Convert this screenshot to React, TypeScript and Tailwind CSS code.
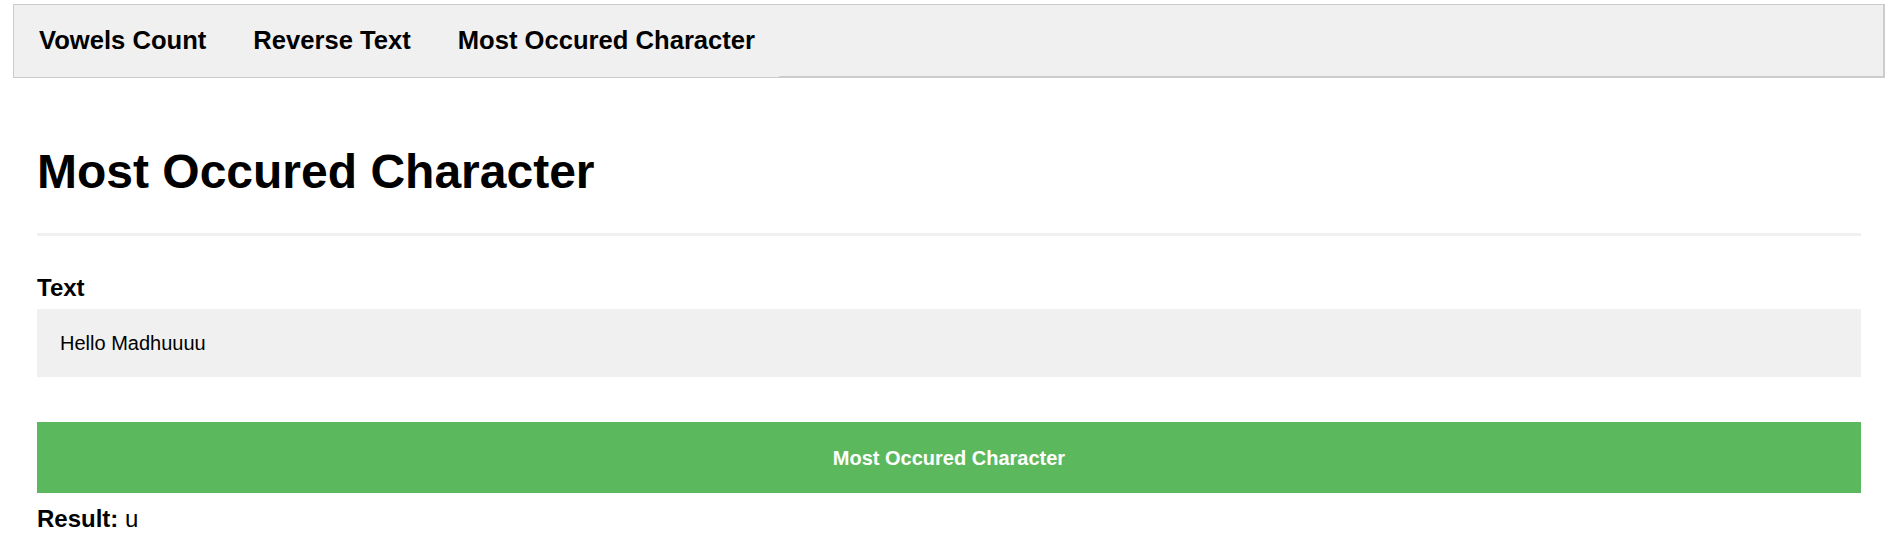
import React from "react";

export default function App() {
  const items = ["Vowels Count", "Reverse Text", "Most Occured Character"];
  return (
    <div className="min-h-[542px] bg-white text-black font-['Liberation_Sans',Arial,sans-serif]">
      <nav className="ml-[13px] mr-[9px] mt-[4px] h-[74px] box-border border-t border-l border-r-2 border-b-2 border-[#cccccc] bg-[#f0f0f0]">
        <ul className="flex h-[72px] pl-[1.5px] w-fit bg-[#f0f0f0]">
          {items.map((t) => (
            <li key={t} className="flex items-center px-[23.5px] text-[25.6px] font-bold leading-none">
              {t}
            </li>
          ))}
        </ul>
      </nav>
      <div className="ml-[37px] mr-[33px]">
        <h1 className="mt-[66px] text-[48px] leading-[56px] font-bold">Most Occured Character</h1>
        <div className="mt-[33px] h-[3px] bg-[#f0f0f0]" />
        <label className="block mt-[39px] text-[24px] leading-[26px] font-bold">Text</label>
        <div className="mt-[8px] h-[68px] bg-[#f0f0f0] flex items-center pl-[23px] text-[20px]">
          Hello Madhuuuu
        </div>
        <button className="mt-[45px] h-[71px] w-full bg-[#5cb85c] text-white text-[20px] font-bold flex items-center justify-center">
          Most Occured Character
        </button>
        <div className="mt-[13px] text-[24px] leading-[26px]">
          <span className="font-bold">Result:</span> u
        </div>
      </div>
    </div>
  );
}
